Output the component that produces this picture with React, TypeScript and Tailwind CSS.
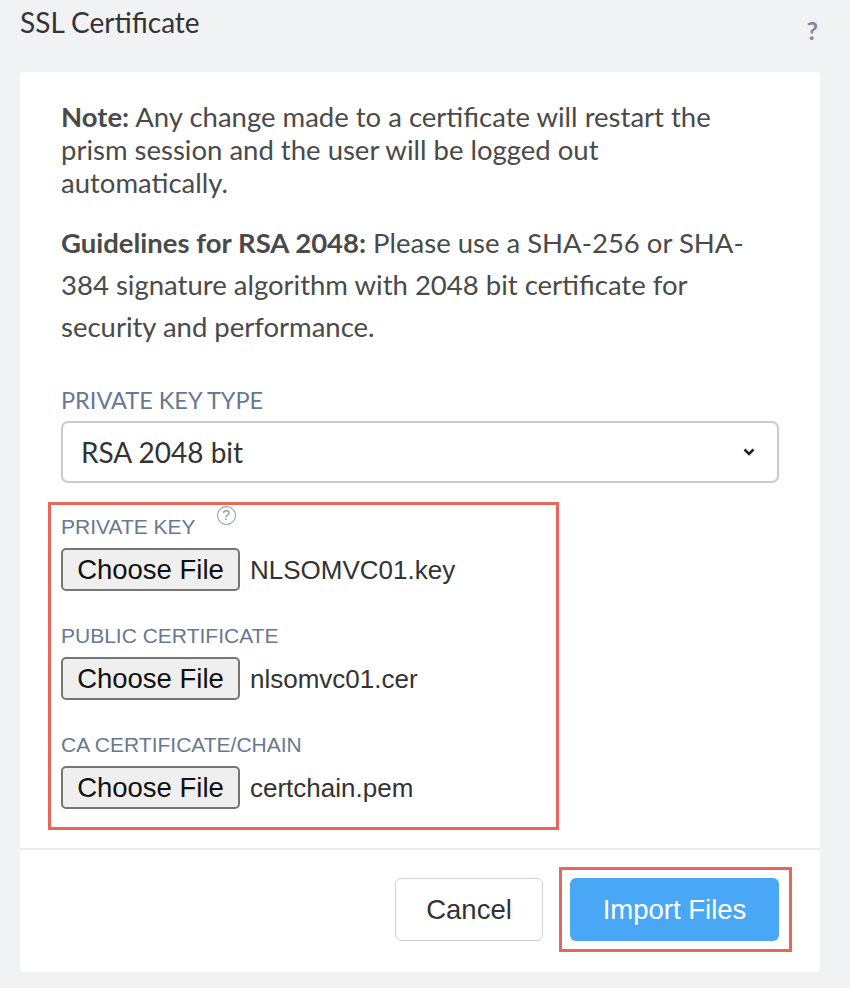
import React from "react";

const body = { fontFamily: "Lato, 'Open Sans', sans-serif" };

function FileRow({ label, file, help }: { label: string; file: string; help?: boolean }) {
  return (
    <div className="flex flex-col">
      <div className="flex items-start h-[24px]">
        <span className="text-[21px] leading-[24px] text-[#687890] font-['Liberation_Sans',sans-serif]">{label}</span>
        {help && (
          <span className="ml-[21px] -mt-[9px] w-[19px] h-[19px] rounded-full border border-[#8a94a6] text-[#8a94a6] text-[14px] leading-[17px] text-center font-['Liberation_Sans',sans-serif]">?</span>
        )}
      </div>
      <div className="flex items-center mt-[9px]">
        <button className="w-[179px] h-[43px] bg-[#efefef] border-2 border-[#767676] rounded-[5px] text-[27.5px] text-[#111] font-['Liberation_Sans',sans-serif] leading-none">
          Choose File
        </button>
        <span className="ml-[10px] text-[26px] leading-[30px] text-[#333] font-['Liberation_Sans',sans-serif]">{file}</span>
      </div>
    </div>
  );
}

export default function App() {
  return (
    <div className="w-[850px] h-[988px] bg-[#f1f2f4] px-[20px] overflow-hidden" style={body}>
      <div className="w-[800px] h-[72px] flex justify-between items-start">
        <div className="mt-[6px] text-[28px] leading-[32px] text-[#333]">SSL Certificate</div>
        <div className="mt-[14px] mr-[2px] text-[25px] leading-[32px] font-bold text-[#7b8ba0]">?</div>
      </div>
      <div className="bg-white w-[800px] h-[900px] rounded-[3px] flex flex-col">
        <div className="pl-[41px] pr-[41px] pt-[28px] h-[776px] flex flex-col">
          <p className="w-[700px] text-[27.5px] leading-[33px] text-[#4a4a4a]">
            <span className="font-bold">Note:</span> Any change made to a certificate will restart the prism session and the user will be logged out automatically.
          </p>
          <p className="mt-[23px] text-[27.5px] leading-[42px] text-[#4a4a4a]">
            <span className="font-bold">Guidelines for RSA 2048:</span> Please use a SHA-256 or SHA-<wbr />384 signature algorithm with 2048 bit certificate for security and performance.
          </p>
          <div className="mt-[38px] text-[23.5px] leading-[28px] text-[#687890]">PRIVATE KEY TYPE</div>
          <div className="mt-[7px] h-[62px] w-[718px] border-2 border-[#c7cad1] rounded-[7px] flex items-center justify-between pl-[18px] pr-[22px]">
            <span className="text-[28px] text-[#333]">RSA 2048 bit</span>
            <svg width="12" height="8" viewBox="0 0 12 8">
              <path d="M1.5 1.5 L6 6 L10.5 1.5" stroke="#222" strokeWidth="2.6" fill="none" />
            </svg>
          </div>
          <div className="mt-[19px] -ml-[13px] w-[511px] h-[328px] border-[3px] border-[#e8665a] pl-[10px] pt-[10px] flex flex-col gap-[33px]">
            <FileRow label="PRIVATE KEY" file="NLSOMVC01.key" help />
            <FileRow label="PUBLIC CERTIFICATE" file="nlsomvc01.cer" />
            <FileRow label="CA CERTIFICATE/CHAIN" file="certchain.pem" />
          </div>
        </div>
        <div className="border-t-2 border-[#ececee] flex-1 flex justify-end items-start pt-[17px] pr-[28px] font-['Liberation_Sans',sans-serif]">
          <button className="mt-[11px] w-[148px] h-[63px] border border-[#cfd2d8] rounded-[6px] bg-white text-[27.5px] text-[#333]">
            Cancel
          </button>
          <div className="ml-[16px] border-[3px] border-[#e8665a] p-[8px] pr-[10px]">
            <button className="w-[209px] h-[63px] rounded-[6px] bg-[#4aa7f5] text-[27.5px] text-white">
              Import Files
            </button>
          </div>
        </div>
      </div>
    </div>
  );
}
